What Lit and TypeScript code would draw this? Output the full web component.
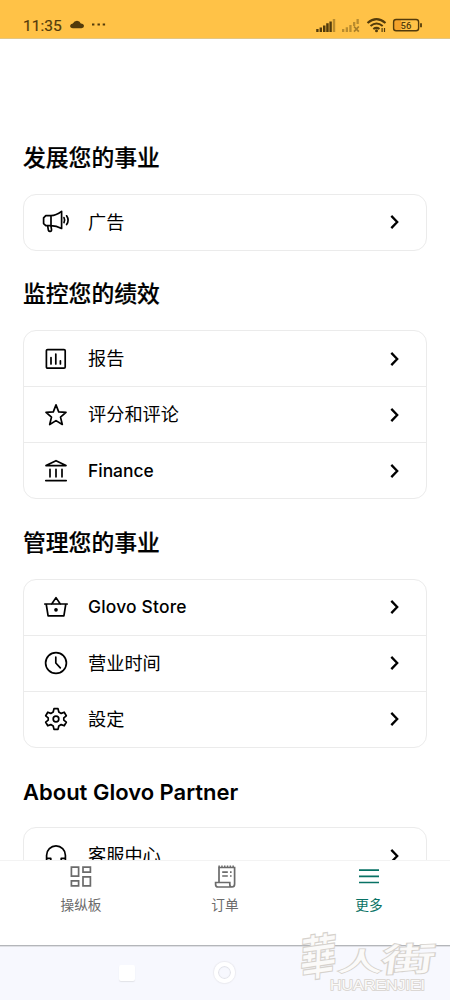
import { LitElement, html, svg, css, nothing } from "lit";
import { customElement, property } from "lit/decorators.js";

const icons: Record<string, unknown> = {
  ads: svg`<path d="M3.4 6.2H8.6V16.2H3.4L1.2 14.2V8.4Z M8.6 6.2C13.2 6.2 16.2 4.2 19.2 1.9V19C16 17.3 13 16.2 8.6 16.2 M5.2 16.3 6 20.9Q6.3 22.2 7.8 21.9 9.4 21.7 9.1 20L8.5 16.4 M21.6 8.2Q22.9 10.6 21.6 13.2 M24.2 6.4Q27.2 10.8 24.2 15.2"/>`,
  report: svg`<rect x="2.4" y="2.6" width="18.8" height="18.6" rx="1.2"/><path d="M7 10.5V17M11.8 7V17M16.4 13.8V17"/>`,
  star: svg`<path d="M12 1.9 14.7 8.9 22 9.4 16.5 14.1 18.3 21.5 12 17.6 5.7 21.5 7.5 14.1 2 9.4 9.3 8.9Z"/>`,
  bank: svg`<path d="M2 6.6 12 1.7 22 6.6Z M6 10.4V17.8M12 10.4V17.8M18 10.4V17.8M1.8 21.6H22.2"/>`,
  basket: svg`<path d="M.8 9H23.2M2.2 9 4.1 20.9H19.9L21.8 9M7.7 9 12 2.6 16.3 9"/><circle cx="12" cy="14.8" r="1" fill="currentColor"/>`,
  clock: svg`<circle cx="12" cy="12" r="10.4"/><path d="M11.8 6.2V12L16.3 16.8"/>`,
  gear: svg`<path d="M10 1.6H14L14.8 5 17.2 6.4 20.2 5.2 22.3 8.8 19.8 10.8V13.2L22.3 15.2 20.2 18.8 17.2 17.6 14.8 19 14 22.4H10L9.2 19 6.8 17.6 3.8 18.8 1.7 15.2 4.2 13.2V10.8L1.7 8.8 3.8 5.2 6.8 6.4 9.2 5Z"/><circle cx="12" cy="12" r="2.8"/>`,
  headset: svg`<path d="M2.6 19V11.3A9.4 9.4 0 0 1 21.4 11.3V19M2.8 14.4H6.8V20H4.6Q2.8 20 2.8 18M21.2 14.4H17.2V20H19.4Q21.2 20 21.2 18"/>`,
};

const navIcons: Record<string, unknown> = {
  board: svg`<path d="M2.4 2.2H9.6V11.2H2.4ZM14 2.2H21.4V7.2H14ZM2.4 15.8H9.6V20.8H2.4ZM14 11.8H21.4V20.8H14Z"/>`,
  orders: svg`<path d="M6 17V2.5H21.6V19Q21.6 22 19 22H5Q2.6 22 2.6 19.5V17.5H16.8V19.5Q16.8 22 19 22M9.2 7.2H14.8M9.2 11H14.8M17 7.2H18.6M17 11H18.6"/><path stroke-dasharray="1.5 1.3" d="M5.4 1.4H22"/>`,
  more: svg`<path d="M2 5.2H22M2 11.4H22M2 17.5H22"/>`,
};

@customElement("menu-card")
class MenuCard extends LitElement {
  @property() heading = "";
  @property({ attribute: false }) items: [string, string][] = [];

  static styles = css`
    :host { display: block; }
    .heading {
      margin: 0; height: 79px; box-sizing: border-box; padding-top: 27px;
      font-size: 22.8px; line-height: 32px; font-weight: 500; white-space: nowrap;
      -webkit-text-stroke: 0.2px #000;
    }
    .heading.latin { font-size: 22px; font-weight: 600; padding-top: 28px; -webkit-text-stroke: 0; }
    .card { border: 1px solid #ebebeb; border-radius: 13px; }
    .row {
      display: flex; align-items: center; height: 55px; box-sizing: border-box;
      padding: 0 22px var(--row-lift, 0px) 20px;
    }
    .row + .row { border-top: 1px solid #ebebeb; height: 56px; }
    .icon {
      width: 24px; height: 24px; overflow: visible; flex: none;
      fill: none; stroke: currentColor; stroke-width: 1.7; stroke-linejoin: round; stroke-linecap: round;
    }
    .label { flex: 1; margin-left: 20px; font-size: 18.2px; line-height: 26px; padding-bottom: 1px; white-space: nowrap; }
    .label.latin { font-size: 17.4px; font-weight: 500; padding-bottom: 0; }
    .label.wide { letter-spacing: 0.2px; }
    .chev { width: 20px; height: 20px; fill: none; stroke: #000; stroke-width: 2.3; }
  `;

  render() {
    const latin = (t: string) => (/^[A-Z]/.test(t) ? "latin" : "");
    return html`
      <h2 class="heading ${latin(this.heading)}">${this.heading}</h2>
      <div class="card">
        ${this.items.map(
          ([icon, label]) => html`<div class="row">
            <svg class="icon" viewBox=${icon === "ads" ? "1.6 .6 24 24" : "0 0 24 24"}>${icons[icon] ?? nothing}</svg>
            <span class="label ${latin(label)} ${label.includes(" ") ? "wide" : ""}">${label}</span>
            <svg class="chev" viewBox="0 0 20 20"><path d="M7.3 3.9 13.2 10 7.3 16.1" /></svg>
          </div>`
        )}
      </div>
    `;
  }
}

@customElement("app-root")
class AppRoot extends LitElement {
  static styles = css`
    :host {
      display: flex; flex-direction: column; position: relative;
      width: 450px; height: 1000px; overflow: hidden;
      background: #fff; color: #000;
      font-family: Inter, "Noto Sans CJK SC", sans-serif;
    }
    .status {
      flex: none; height: 39px; box-sizing: border-box; display: flex; align-items: flex-start;
      padding: 16px 26px 0 23px; background: #ffc247; color: #533b0b;
      border-bottom: 1px solid #e3c684;
    }
    .time { font: 400 15.5px/20px Roboto, sans-serif; -webkit-text-stroke: 0.2px #533b0b; width: 46px; }
    .left { width: 40px; height: 20px; }
    .right { margin-left: auto; width: 110px; height: 20px; overflow: visible; }
    .pct { font: 500 9.5px Roboto, sans-serif; }
    .content { flex: none; height: 821px; box-sizing: border-box; overflow: hidden; padding: 76px 23px 0; }
    .lift { --row-lift: 1px; }
    .gap { padding-top: 1px; }
    .nav {
      flex: none; height: 86px; box-sizing: border-box; display: grid;
      grid-template-columns: 1fr 1fr 1fr; padding: 4px 9px 0;
      border-top: 1px solid #f3f3f3; border-bottom: 1px solid #b4b6ba; background: #fff;
    }
    .tab { display: flex; flex-direction: column; align-items: center; color: #6b6b6b; }
    .tab.on { color: #087265; }
    .tab svg { width: 24px; height: 24px; fill: none; stroke: currentColor; stroke-width: 1.7; }
    .tab span { font-size: 13.7px; line-height: 20px; margin-top: 6px; }
    .system {
      flex: 1; display: flex; align-items: center; background: #f7f8fe;
      border-top: 1px solid #dfe0e5; padding: 0 0 2px 119px;
    }
    .square { width: 16px; height: 16px; border-radius: 2px; background: #fff; box-shadow: 0 1px 1px #e2e3e8; }
    .circle {
      width: 13px; height: 13px; margin-left: 79px; border: 4px solid #fff; border-radius: 50%;
      box-shadow: 0 0 1px 1px #ececf1, inset 0 0 1px 1px #dfe0e6;
    }
    .mark { position: absolute; left: 300px; top: 928px; width: 150px; height: 72px; overflow: visible; }
    .mark text { fill: #fbfaf9; stroke: #d6d2cd; paint-order: stroke; }
    .brush { font-family: "Noto Sans CJK TC", sans-serif; font-weight: 500; stroke-width: 2; }
    .latin { font: 400 15.5px "Liberation Sans", sans-serif; stroke-width: 1.6; }
  `;

  private tab(icon: string, label: string, on = false) {
    return html`<div class="tab ${on ? "on" : ""}">
      <svg viewBox="0 0 24 24">${navIcons[icon]}</svg><span>${label}</span>
    </div>`;
  }

  render() {
    return html`
      <header class="status">
        <span class="time">11:35</span>
        <svg class="left" viewBox="0 0 40 20" fill="currentColor">
          <path d="M4 12.3Q1 12.2 1.1 9.8 1.4 7.6 3.8 7.4 5.2 4.7 8 4.7 10.8 4.8 11.8 7.4 14.8 7.6 15 10 15 12 12.5 12.3Z" />
          <path d="M23 7.6h2.4v2H23zM28.5 7.6h2.4v2h-2.4zM33.7 7.6h2.4v2h-2.4z" />
        </svg>
        <svg class="right" viewBox="-3 0 110 20">
          <g fill="currentColor">
            <path d="M-.8 13h2.4v3h-2.4zM2.6 11.4H5V16H2.6zM6 9.6h2.5V16H6zM9.2 7.2h2.5V16H9.2zM12.4 5.4h2.4V16h-2.4z" />
            <path opacity=".4" d="M15.8 3h2.4v13h-2.4zM25 13h2.3v3H25zM28.7 11.2H31V16h-2.3zM32.3 9h2.3v7h-2.3zM36 6h2.3v4H36zM39.5 3h2.3v5h-2.3z" />
          </g>
          <path d="M37 10.5 41.8 15.7M41.8 10.5 37 15.7" stroke="currentColor" stroke-width="1.7" opacity=".5" />
          <g transform="translate(2.5 0)" fill="none" stroke="currentColor" stroke-width="2.1">
            <path d="M48 7Q57 -.8 66 7M51 10Q57 5 63.2 10M53.8 13Q57 10.7 60 13" />
            <path stroke-width="1.2" d="M62.6 12v4M65 12v4" />
          </g>
          <circle cx="59.5" cy="14.8" r="1.5" fill="currentColor" />
          <g transform="translate(2 0)">
            <rect x="75" y="4" width="7" height="10" fill="#f5a32b" />
            <rect x="74.6" y="3.5" width="25" height="11.3" rx="2.5" fill="none" stroke="currentColor" stroke-width="1.4" />
            <path d="M102 7.3v4" stroke="currentColor" stroke-width="1.8" />
            <text class="pct" x="81.6" y="12.7" fill="currentColor">56</text>
          </g>
        </svg>
      </header>
      <main class="content">
        <menu-card class="lift" heading="发展您的事业" .items=${[["ads", "广告"]]}></menu-card>
        <menu-card heading="监控您的绩效" .items=${[["report", "报告"], ["star", "评分和评论"], ["bank", "Finance"]]}></menu-card>
        <menu-card class="gap lift" heading="管理您的事业" .items=${[["basket", "Glovo Store"], ["clock", "营业时间"], ["gear", "設定"]]}></menu-card>
        <menu-card heading="About Glovo Partner" .items=${[["headset", "客服中心"]]}></menu-card>
      </main>
      <nav class="nav">
        ${this.tab("board", "操纵板")}${this.tab("orders", "订单")}${this.tab("more", "更多", true)}
      </nav>
      <footer class="system"><div class="square"></div><div class="circle"></div></footer>
      <svg class="mark" viewBox="0 0 150 72">
        <text class="brush" font-size="36" transform="translate(0 49) rotate(-8) skewX(-10) scale(1 1.3)">華</text>
        <text class="brush" font-size="36" transform="translate(37 43) skewX(-8) scale(1.25 .72)">人</text>
        <text class="brush" font-size="36" transform="translate(80 44) rotate(-2) skewX(-10) scale(1.5 .9)">街</text>
        <text class="latin" x="30" y="62" textLength="95" lengthAdjust="spacingAndGlyphs">HUARENJIEI</text>
      </svg>
    `;
  }
}
